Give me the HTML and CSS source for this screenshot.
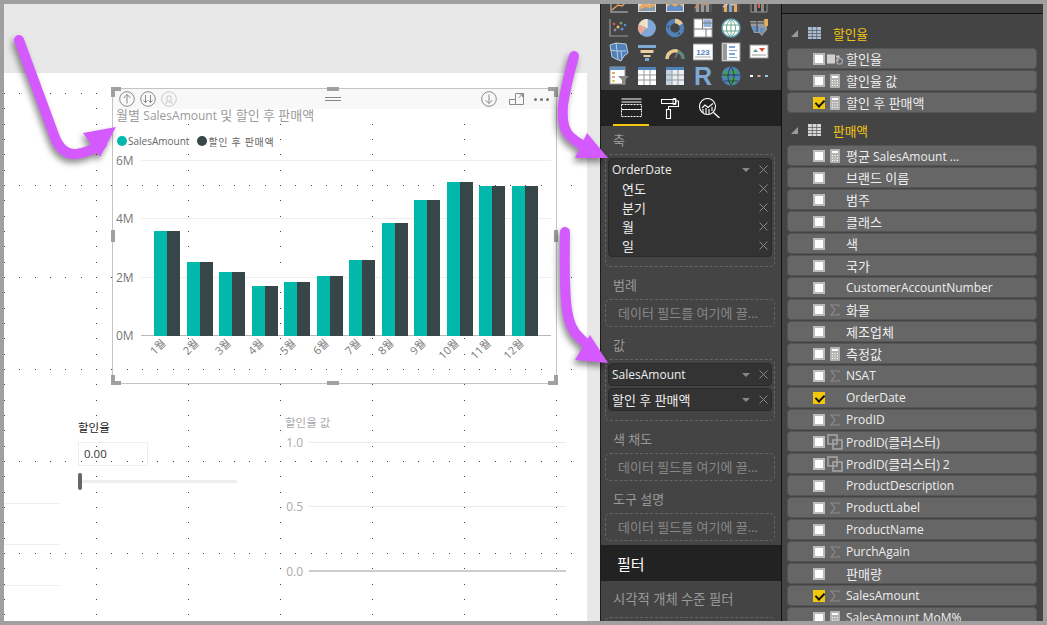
FILE: index.html
```html
<!DOCTYPE html>
<html lang="ko">
<head>
    <meta charset="UTF-8">
    <meta name="viewport" content="width=device-width, initial-scale=1.0">
    <title>Power BI 보고서</title>
    <link rel="stylesheet" href="styles.css">
</head>
<body>

<svg class="defs" width="0" height="0">
    <defs>
        <symbol id="i-calc" viewBox="0 0 10 14">
            <rect width="10" height="14" rx="1" fill="#b4b4b4"/>
            <rect x="2" y="2" width="6" height="2" fill="#fff"/>
            <path d="M2 6h1v1H2zM4.500 6h1v1h-1zM7 6h1v1H7zM2 8.500h1v1H2zM4.500 8.500h1v1h-1zM7 8.500h1v1H7zM2 11h1v1H2zM4.500 11h1v1h-1zM7 11h1v1H7z" fill="#fff"/>
        </symbol>
        <symbol id="i-sum" viewBox="0 0 10 12">
            <path d="M9 2.500V1H1l4 5-4 5h8V9.500" fill="none" stroke="#8c8c8c" stroke-width="1.200"/>
        </symbol>
        <symbol id="i-cluster" viewBox="0 0 16 16">
            <path d="M1 1h9v9H1zM6 6h9v9H6z" fill="none" stroke="#a6a6a6" stroke-width="1.600"/>
        </symbol>
        <symbol id="i-x" viewBox="0 0 9 9">
            <path d="M.5.500l8 8M8.500.500l-8 8" stroke="#8a8a8a" stroke-width="1" fill="none"/>
        </symbol>
    </defs>
</svg>

<div class="frame">
    <main class="canvas">
        <div class="page">
            <svg class="dots">
                <defs>
                    <pattern id="dotgrid" width="92" height="92" patternUnits="userSpaceOnUse">
                        <path d="M0 0h1v1H0zM15 0h1v1h-1zM31 0h1v1h-1zM46 0h1v1h-1zM61 0h1v1h-1zM77 0h1v1h-1zM0 15h1v1H0zM0 31h1v1H0zM0 46h1v1H0zM0 61h1v1H0zM0 77h1v1H0z" fill="#444"/>
                    </pattern>
                </defs>
                <rect width="100%" height="100%" fill="url(#dotgrid)"/>
            </svg>

            <section class="visual">
                <span class="handle corner tl"></span>
                <span class="handle corner tr"></span>
                <span class="handle corner bl"></span>
                <span class="handle corner br"></span>
                <span class="handle mid-h top"></span>
                <span class="handle mid-h bottom"></span>
                <span class="handle mid-v left"></span>
                <span class="handle mid-v right"></span>

                <div class="visual-header">
                    <svg class="head-icon" viewBox="0 0 16 16"><circle cx="8" cy="8" r="7.300"/><path d="M8 12.500V3.500M4.500 7L8 3.500 11.500 7"/></svg>
                    <svg class="head-icon" viewBox="0 0 16 16"><circle cx="8" cy="8" r="7.300"/><path d="M5.500 4v7.500M3.500 9.500l2 2 2-2M10.500 4v7.500M8.500 9.500l2 2 2-2"/></svg>
                    <svg class="head-icon faint" viewBox="0 0 16 16"><circle cx="8" cy="8" r="7.300"/><path d="M4 12h2V5h4v7h2M8 9v3"/></svg>
                    <span class="grip"></span>
                    <svg class="head-icon" viewBox="0 0 16 16"><circle cx="8" cy="8" r="7.300"/><path d="M8 3.500v9M4.500 9L8 12.500 11.500 9"/></svg>
                    <svg class="focus-icon" viewBox="0 0 15 12"><path d="M.5 6.500h6v5h-6zM6.500 11.500h8V.500h-8v6M9.500 5l4-4M10.500 1h3v3"/></svg>
                    <span class="more">
                        <i></i><i></i><i></i>
                    </span>
                </div>

                <h2 class="visual-title">월별 <span class="latin">SalesAmount</span> 및 할인 후 판매액</h2>

                <div class="legend">
                    <span class="legend-dot teal"></span><span class="legend-text first">SalesAmount</span>
                    <span class="legend-dot slate"></span><span class="legend-text second">할인 후 판매액</span>
                </div>

                <div class="plot">
                    <div class="axis-row"><span>6M</span><i></i></div>
                    <div class="axis-row"><span>4M</span><i></i></div>
                    <div class="axis-row"><span>2M</span><i></i></div>
                    <div class="axis-row base"><span>0M</span><i></i></div>
                    <div class="bars">
                        <div class="group"><b class="teal" style="height:105px"></b><b class="slate" style="height:105px"></b></div>
                        <div class="group"><b class="teal" style="height:74px"></b><b class="slate" style="height:74px"></b></div>
                        <div class="group"><b class="teal" style="height:64px"></b><b class="slate" style="height:64px"></b></div>
                        <div class="group"><b class="teal" style="height:50px"></b><b class="slate" style="height:50px"></b></div>
                        <div class="group"><b class="teal" style="height:54px"></b><b class="slate" style="height:54px"></b></div>
                        <div class="group"><b class="teal" style="height:60px"></b><b class="slate" style="height:60px"></b></div>
                        <div class="group"><b class="teal" style="height:76px"></b><b class="slate" style="height:76px"></b></div>
                        <div class="group"><b class="teal" style="height:113px"></b><b class="slate" style="height:113px"></b></div>
                        <div class="group"><b class="teal" style="height:136px"></b><b class="slate" style="height:136px"></b></div>
                        <div class="group"><b class="teal" style="height:154px"></b><b class="slate" style="height:154px"></b></div>
                        <div class="group"><b class="teal" style="height:150px"></b><b class="slate" style="height:150px"></b></div>
                        <div class="group"><b class="teal" style="height:150px"></b><b class="slate" style="height:150px"></b></div>
                    </div>
                </div>

                <div class="months">
                    <span>1월</span><span>2월</span><span>3월</span><span>4월</span><span>5월</span><span>6월</span>
                    <span>7월</span><span>8월</span><span>9월</span><span>10월</span><span>11월</span><span>12월</span>
                </div>
            </section>

            <section class="slicer">
                <div class="slicer-label">할인율</div>
                <div class="slicer-input">0.00</div>
                <div class="slider"><span class="thumb"></span></div>
            </section>

            <section class="value-chart">
                <div class="value-title">할인율 값</div>
                <div class="value-rows">
                    <div class="value-row"><span>1.0</span><i></i></div>
                    <div class="value-row"><span>0.5</span><i></i></div>
                    <div class="value-row base"><span>0.0</span><i></i></div>
                </div>
            </section>

            <div class="cut-chart"><i></i><i></i><i></i></div>
        </div>
    </main>

    <aside class="viz-pane">
        <div class="gallery">
            <div class="gallery-grid">
                <svg viewBox="0 0 20 20"><path d="M2 1v17h17" fill="none" stroke="#999" stroke-width="1.500"/><path d="M3 16l6-5 4 1 6-6" fill="none" stroke="#e8a05a" stroke-width="1.500"/></svg>
                <svg viewBox="0 0 20 20"><rect x="1" y="1" width="18" height="17" fill="#ddd"/><path d="M2 13l5-5 5 3 6-5v11H2z" fill="#e8a860"/><path d="M2 16l6-3 5 1 5-2v5H2z" fill="#8a9bb0"/></svg>
                <svg viewBox="0 0 20 20"><rect x="1" y="1" width="18" height="17" fill="#ddd"/><path d="M2 10l4-3 4 3 4-3 4 3v7H2z" fill="#e8a860"/><path d="M2 13l4-3 4 3 4-3 4 3v4H2z" fill="#5f8fc4"/></svg>
                <svg viewBox="0 0 20 20"><path d="M1 1h18v17H1z" fill="#555"/><path d="M3 9h3v9H3zM8 7h3v11H8zM13 5h3v13h-3z" fill="#999"/><path d="M2 14l6-6 4 3 7-7" fill="none" stroke="#e8804a" stroke-width="1.300"/></svg>
                <svg viewBox="0 0 20 20"><path d="M1 1h18v17H1z" fill="#555"/><path d="M3 8h3v10H3z" fill="#e8a860"/><path d="M8 10h3v8H8z" fill="#7fa4cc"/><path d="M13 6h3v12h-3z" fill="#e8a860"/><path d="M2 13l6-4 4 2 7-7" fill="none" stroke="#d0d0d0" stroke-width="1.200"/></svg>
                <svg viewBox="0 0 20 20"><path d="M2 1h16v17H2z" fill="#3a3a3a" stroke="#999"/><path d="M5 4h3v14H5zM12 8h3v10h-3z" fill="#888"/><path d="M9 6h2v8H9z" fill="#e0603a"/></svg>

                <svg viewBox="0 0 20 20"><path d="M1 1v17h18" fill="none" stroke="#999" stroke-width="1.200"/><circle cx="5" cy="6" r="1.300" fill="#d55"/><circle cx="12" cy="5" r="1.500" fill="#7a9c6c"/><circle cx="16" cy="7" r="1.300" fill="#5f8fc4"/><circle cx="9" cy="9" r="1.500" fill="#e8c060"/><circle cx="13" cy="11" r="1.500" fill="#5f8fc4"/><circle cx="6" cy="12" r="1.400" fill="#88a"/></svg>
                <svg viewBox="0 0 20 20"><circle cx="10" cy="10" r="9" fill="#7fa8d4"/><path d="M10 10V1a9 9 0 0 0-8.400 5.700z" fill="#f0e0c0"/><path d="M10 10L1.600 6.700A9 9 0 0 0 3.500 16.200z" fill="#e8a898"/><path d="M10 10V1" stroke="#fff" fill="none"/></svg>
                <svg viewBox="0 0 20 20"><circle cx="10" cy="10" r="7" fill="none" stroke="#4f82b8" stroke-width="4.500"/><path d="M10 3a7 7 0 0 1 6 3.500" fill="none" stroke="#e8c890" stroke-width="4.500"/><path d="M3.500 7.500L3 10M13 16.300l2 -1.500" stroke="#444" fill="none" stroke-width="1.200"/></svg>
                <svg viewBox="0 0 20 20"><rect width="18" height="18" x="1" y="1" fill="#fff" stroke="#999"/><path d="M10.500 2H18v7h-7.500z" fill="#8fb3d9"/><path d="M9.500 1v10M1 11h18M13 11v8M10 5h9" stroke="#777" fill="none"/></svg>
                <svg viewBox="0 0 20 20"><circle cx="10" cy="10" r="9" fill="#fff" stroke="#5f9fb0" stroke-width="1.500"/><path d="M1 7h18M1 13h18M10 1v18M10 1c-6 5-6 13 0 18M10 1c6 5 6 13 0 18" fill="none" stroke="#6fa890"/></svg>
                <svg viewBox="0 0 20 20"><path d="M1 3h14l3 2v7l-3 3-2 3-3-3H5L2 8z" fill="#9a9a9a"/><path d="M3 8h7v6H5zM11 10h5l-3 6-2-2z" fill="#5f8fc4"/><path d="M15 1h4v7h-3z" fill="#e8b050"/><path d="M1 5h14M8 3v11" stroke="#444" fill="none"/></svg>

                <svg viewBox="0 0 20 20"><path d="M1 3l6-2 10 1 2 9-4 3-3 5-5-2-4-2-1-6z" fill="#4f82b8" stroke="#bcd" stroke-width="1"/><path d="M7 1l1 8 9 0M1 8l7 1 1 9M12 9l1 8" stroke="#bcd" fill="none"/></svg>
                <svg viewBox="0 0 20 20"><path d="M1 3h18v3H1z" fill="#7fa8d4"/><path d="M3.500 8h13v3h-13z" fill="#e8d0a0"/><path d="M6.500 13h7v2h-7z" fill="#e8d0a0"/><path d="M8 16h4v3H8z" fill="#7fa8d4"/></svg>
                <svg viewBox="0 0 20 20"><path d="M2 17a8 8 0 0 1 11-7.500" fill="none" stroke="#e8c890" stroke-width="3.500"/><path d="M13 9.500a8 8 0 0 1 5 7.500" fill="none" stroke="#5f8a7a" stroke-width="3.500"/><path d="M13 10l-3 6" stroke="#777" stroke-width="1.500"/></svg>
                <svg viewBox="0 0 20 20"><rect x="0" y="2" width="20" height="16" fill="#fff" stroke="#999" stroke-width="1"/><text x="10" y="12.500" class="card-num">123</text><path d="M2 15h16" stroke="#aaa"/></svg>
                <svg viewBox="0 0 20 20"><rect x="1" y="1" width="18" height="18" fill="#fff" stroke="#999"/><path d="M2 2h4v16H2z" fill="#999"/><path d="M8 4h6v2H8zM8 8h8v1H8zM8 11h6v2H8zM8 15h8v1H8z" fill="#7fa8d4"/></svg>
                <svg viewBox="0 0 20 20"><rect x="1" y="3" width="18" height="13" fill="#fff" stroke="#999"/><path d="M4 10l2.500-3L9 10z" fill="#5a9a7a"/><path d="M10 6h6l-3 4z" fill="#d0503a"/><path d="M3 13h14" stroke="#999"/></svg>

                <svg viewBox="0 0 20 20"><rect x="1" y="1" width="15" height="17" fill="#fff" stroke="#999"/><path d="M1 1h15v3H1z" fill="#5f8fc4"/><path d="M3 6h3v2H3z" fill="#e8a860"/><path d="M3 10h3v2H3z" fill="#e8a898"/><path d="M3 14h3v2H3z" fill="#e8c860"/><path d="M9 10h11l-4 4v5l-3 0v-5z" fill="#888"/></svg>
                <svg viewBox="0 0 20 20"><rect width="18" height="18" x="1" y="1" fill="#fff"/><path d="M1 1h18v3H1z" fill="#4f82b8"/><path d="M7 4v15M13 4v15M1 9h18M1 14h18" stroke="#999" fill="none"/></svg>
                <svg viewBox="0 0 20 20"><rect width="18" height="18" x="1" y="1" fill="#e8eef4"/><path d="M1 1h18v3H1z" fill="#4f82b8"/><path d="M1 4h6v15H1z" fill="#c4d4e4"/><path d="M7 4v15M13 4v15M1 9h18M1 14h18" stroke="#999" fill="none"/></svg>
                <svg class="open" viewBox="0 0 20 20"><text x="10" y="18.500" class="r-glyph">R</text></svg>
                <svg viewBox="0 0 20 20"><circle cx="10" cy="10" r="9.500" fill="#4f82b8"/><path d="M3 4l5 2-2 5-4 1zM11 2l6 4-3 3-4-1zM7 13l6-2 3 3-4 5-3-1z" fill="#3fa05a"/><path d="M1 9h18M3 15h14M10 1c-4 5-4 13 0 18M10 1c4 5 4 13 0 18" stroke="#223" stroke-width=".700" fill="none"/></svg>
                <svg viewBox="0 0 20 20"><path d="M1 9h3v2H1z" fill="#fff"/><path d="M8.500 9h3v2h-3z" fill="#e8a0a0"/><path d="M16 9h3v2h-3z" fill="#a0c0e8"/></svg>
            </div>
        </div>

        <nav class="tabs">
            <a class="tab active">
                <svg width="21" height="20" viewBox="0 0 21 20"><path d="M.5 1h20M.5 4h20" stroke="#fff" fill="none"/><path d="M.5 6.500h20v5H.5zM.5 11.500h20v7H.500z" stroke="#fff" stroke-dasharray="2 1" fill="none"/></svg>
            </a>
            <a class="tab">
                <svg width="19" height="21" viewBox="0 0 19 21"><path d="M.5 1.500h14v4H.5zM14.500 3h3v5.500H7.500v3" stroke="#fff" fill="none" stroke-width="1.100"/><path d="M5.500 11.500h4v9h-4z" stroke="#fff" fill="none" stroke-width="1.100"/><path d="M12 .5h3v6h-3z" fill="none" stroke="#fff" stroke-width=".800"/></svg>
            </a>
            <a class="tab">
                <svg width="21" height="20" viewBox="0 0 21 20"><circle cx="8.500" cy="8.500" r="8" stroke="#fff" fill="none" stroke-width="1.100"/><path d="M14.500 14.500l6 5.500" stroke="#fff" stroke-width="1.300"/><path d="M3 10l3-3 3 2.500 5-4" stroke="#fff" fill="none" stroke-width="1.100"/><path d="M4 11v4M7 10v6M10 11v5M13 9v4" stroke="#fff" stroke-width="1.100"/></svg>
            </a>
        </nav>

        <div class="well-block first">
            <div class="well-label">축</div>
            <div class="well">
                <div class="field-group">
                    <div class="field-row"><span class="field-name">OrderDate</span><span class="caret"></span><svg class="remove"><use href="#i-x"/></svg></div>
                    <div class="field-row sub"><span class="field-name ko">연도</span><svg class="remove"><use href="#i-x"/></svg></div>
                    <div class="field-row sub"><span class="field-name ko">분기</span><svg class="remove"><use href="#i-x"/></svg></div>
                    <div class="field-row sub"><span class="field-name ko">월</span><svg class="remove"><use href="#i-x"/></svg></div>
                    <div class="field-row sub"><span class="field-name ko">일</span><svg class="remove"><use href="#i-x"/></svg></div>
                </div>
            </div>
        </div>

        <div class="well-block">
            <div class="well-label">범례</div>
            <div class="well empty">데이터 필드를 여기에 끌...</div>
        </div>

        <div class="well-block">
            <div class="well-label">값</div>
            <div class="well">
                <div class="field-group single"><div class="field-row"><span class="field-name">SalesAmount</span><span class="caret"></span><svg class="remove"><use href="#i-x"/></svg></div></div>
                <div class="field-group single"><div class="field-row"><span class="field-name ko">할인 후 판매액</span><span class="caret"></span><svg class="remove"><use href="#i-x"/></svg></div></div>
            </div>
        </div>

        <div class="well-block">
            <div class="well-label">색 채도</div>
            <div class="well empty">데이터 필드를 여기에 끌...</div>
        </div>

        <div class="well-block">
            <div class="well-label">도구 설명</div>
            <div class="well empty">데이터 필드를 여기에 끌...</div>
        </div>

        <div class="filter-band">필터</div>

        <div class="well-block">
            <div class="well-label filter-label">시각적 개체 수준 필터</div>
            <div class="well empty"></div>
        </div>
    </aside>

    <aside class="fields-pane">
        <div class="fields-top"></div>

        <div class="table-head">
            <svg class="tree-caret" viewBox="0 0 7 7"><path d="M7 0v7H0z"/></svg>
            <svg class="table-icon" viewBox="0 0 13 12"><path d="M0 0h13v12H0z" fill="#a9bdd6"/><path d="M0 3.500h13M0 6.500h13M0 9.500h13M4.300 0v12M8.700 0v12" stroke="#555" stroke-width=".700"/></svg>
            <span>할인율</span>
        </div>
        <div class="field"><span class="check"></span><svg class="type wide" viewBox="0 0 14 12"><path d="M0 2h7v8H0z" fill="#d0d0d0"/><path d="M8 3h3v2H8zM8 6h2v2H8z" fill="#ccc"/><circle cx="11" cy="8" r="2.500" fill="none" stroke="#aaa"/></svg><span class="name ko">할인율</span></div>
        <div class="field"><span class="check"></span><svg class="type"><use href="#i-calc"/></svg><span class="name ko">할인율 값</span></div>
        <div class="field"><span class="check on"></span><svg class="type"><use href="#i-calc"/></svg><span class="name ko">할인 후 판매액</span></div>

        <div class="table-head second">
            <svg class="tree-caret" viewBox="0 0 7 7"><path d="M7 0v7H0z"/></svg>
            <svg class="table-icon" viewBox="0 0 13 12"><path d="M0 0h13v12H0z" fill="#d8d8d8"/><path d="M0 3.500h13M0 6.500h13M0 9.500h13M4.300 0v12M8.700 0v12" stroke="#555" stroke-width=".700"/></svg>
            <span>판매액</span>
        </div>
        <div class="field"><span class="check"></span><svg class="type"><use href="#i-calc"/></svg><span class="name"><span class="ko">평균</span> SalesAmount ...</span></div>
        <div class="field"><span class="check"></span><span class="type"></span><span class="name ko">브랜드 이름</span></div>
        <div class="field"><span class="check"></span><span class="type"></span><span class="name ko">범주</span></div>
        <div class="field"><span class="check"></span><span class="type"></span><span class="name ko">클래스</span></div>
        <div class="field"><span class="check"></span><span class="type"></span><span class="name ko">색</span></div>
        <div class="field"><span class="check"></span><span class="type"></span><span class="name ko">국가</span></div>
        <div class="field"><span class="check"></span><span class="type"></span><span class="name">CustomerAccountNumber</span></div>
        <div class="field"><span class="check"></span><svg class="type"><use href="#i-sum"/></svg><span class="name ko">화물</span></div>
        <div class="field"><span class="check"></span><span class="type"></span><span class="name ko">제조업체</span></div>
        <div class="field"><span class="check"></span><svg class="type"><use href="#i-calc"/></svg><span class="name ko">측정값</span></div>
        <div class="field"><span class="check"></span><svg class="type"><use href="#i-sum"/></svg><span class="name">NSAT</span></div>
        <div class="field"><span class="check on"></span><span class="type"></span><span class="name">OrderDate</span></div>
        <div class="field"><span class="check"></span><svg class="type"><use href="#i-sum"/></svg><span class="name">ProdID</span></div>
        <div class="field"><span class="check"></span><svg class="type wide"><use href="#i-cluster"/></svg><span class="name">ProdID(<span class="ko">클러스터</span>)</span></div>
        <div class="field"><span class="check"></span><svg class="type wide"><use href="#i-cluster"/></svg><span class="name">ProdID(<span class="ko">클러스터</span>) 2</span></div>
        <div class="field"><span class="check"></span><span class="type"></span><span class="name">ProductDescription</span></div>
        <div class="field"><span class="check"></span><svg class="type"><use href="#i-sum"/></svg><span class="name">ProductLabel</span></div>
        <div class="field"><span class="check"></span><span class="type"></span><span class="name">ProductName</span></div>
        <div class="field"><span class="check"></span><svg class="type"><use href="#i-sum"/></svg><span class="name">PurchAgain</span></div>
        <div class="field"><span class="check"></span><span class="type"></span><span class="name ko">판매량</span></div>
        <div class="field"><span class="check on"></span><svg class="type"><use href="#i-sum"/></svg><span class="name">SalesAmount</span></div>
        <div class="field"><span class="check"></span><svg class="type"><use href="#i-calc"/></svg><span class="name">SalesAmount MoM%</span></div>
    </aside>
</div>

<!-- callout arrows drawn on top of the screenshot -->
<svg class="arrows" viewBox="0 0 1047 625">
    <path class="shaft" d="M19 40 L54 135 Q61 155 76 154 Q88 153 102 144"/>
    <polygon class="head" points="116,127 83,133 100,157"/>
    <path class="shaft" d="M574 56 Q566 85 563 105 Q561 130 572 138 Q578 143 590 150"/>
    <polygon class="head" points="608,158 575,158 587,133"/>
    <path class="shaft" d="M565 232 Q564 290 567 310 Q570 330 580 338 Q586 344 594 352"/>
    <polygon class="head" points="608,363 575,360 590,335"/>
</svg>

</body>
</html>
```

FILE: styles.css
```css
* {
    box-sizing: border-box;
}

html, body {
    margin: 0;
    padding: 0;
}

body {
    width: 1047px;
    height: 625px;
    overflow: hidden;
    position: relative;
    font-family: "Open Sans", "Noto Sans CJK KR", sans-serif;
}

.defs {
    position: absolute;
}

.frame {
    display: flex;
    width: 1047px;
    height: 625px;
    border: 4px solid #a0a0a0;
}

/* canvas */
.canvas {
    width: 596px;
    flex: none;
    padding: 69px 13px 0 0;
    background: #e8e8e8;
}

.page {
    position: relative;
    height: 100%;
    background: #fff;
}

.dots {
    position: absolute;
    left: 0;
    top: 20px;
    width: 100%;
    height: calc(100% - 20px);
}

.visual {
    position: absolute;
    left: 108px;
    top: 15px;
    width: 445px;
    height: 296px;
    border: 1px solid #c4c4c4;
}

.handle {
    position: absolute;
    background: #a0a0a0;
}

.corner {
    width: 10px;
    height: 10px;
    background: none;
    border: 0 solid #a0a0a0;
}

.tl { left: -2px; top: -2px; border-width: 4px 0 0 4px; }
.tr { right: -2px; top: -2px; border-width: 4px 4px 0 0; }
.bl { left: -2px; bottom: -2px; border-width: 0 0 4px 4px; }
.br { right: -2px; bottom: -2px; border-width: 0 4px 4px 0; }

.mid-h {
    width: 12px;
    height: 4px;
    left: 214px;
}

.mid-h.top { top: -2px; }
.mid-h.bottom { bottom: -2px; }

.mid-v {
    width: 4px;
    height: 12px;
    top: 141px;
}

.mid-v.left { left: -2px; }
.mid-v.right { right: -2px; }

.visual-header {
    display: flex;
    align-items: center;
    height: 20px;
    padding: 0 6px 0 6px;
    background: #f8f8f8;
}

.head-icon {
    width: 16px;
    height: 16px;
    margin-right: 5px;
    fill: none;
    stroke: #8a8a8a;
    stroke-width: 1;
}

.head-icon.faint {
    stroke: #c8c8c8;
}

.grip {
    width: 16px;
    height: 4px;
    margin: -1px 0 0 143px;
    border-top: 1px solid #888;
    border-bottom: 1px solid #888;
}

.visual-header .grip + .head-icon {
    margin-left: 140px;
    margin-right: 12px;
}

.focus-icon {
    width: 15px;
    height: 12px;
    margin-right: 10px;
    fill: none;
    stroke: #8a8a8a;
    stroke-width: 1;
}

.more {
    display: flex;
    gap: 3px;
}

.more i {
    width: 3px;
    height: 3px;
    background: #777;
    border-radius: 50%;
}

.visual-title {
    margin: -1px 0 0;
    padding-left: 3px;
    height: 17px;
    font-size: 13px;
    font-weight: 400;
    line-height: 14px;
    color: #9a9a9a;
    white-space: nowrap;
}

.visual-title .latin {
    font-size: 12px;
}

.legend {
    display: flex;
    align-items: center;
    height: 14px;
    margin-top: 9px;
    padding-left: 4px;
    font-size: 10px;
    color: #666;
    white-space: nowrap;
}

.legend-dot {
    width: 10px;
    height: 10px;
    border-radius: 50%;
    margin-right: 1px;
}

.legend-text.first {
    margin-right: 8px;
}

.legend-text.second {
    letter-spacing: .7px;
}

.teal { background: #01b8aa; }
.slate { background: #374649; }

.plot {
    position: relative;
    display: flex;
    flex-direction: column;
    justify-content: space-between;
    height: 190px;
    margin-top: 5px;
}

.axis-row {
    display: flex;
    align-items: center;
    height: 14px;
    padding-right: 5px;
    font-size: 12px;
    color: #777;
}

.axis-row span {
    width: 28px;
    padding-left: 3px;
}

.axis-row i {
    flex: 1;
    height: 1px;
    background: #eee;
}

.axis-row.base i {
    background: #b8b8b8;
}

.bars {
    position: absolute;
    left: 41px;
    bottom: 7px;
    display: flex;
    align-items: flex-end;
}

.group {
    display: flex;
    align-items: flex-end;
    width: 32.55px;
}

.group b {
    display: block;
    width: 13px;
}

.months {
    display: flex;
    padding-left: 18px;
    margin-top: -9px;
    font-size: 11px;
    line-height: 14px;
    color: #777;
}

.months span {
    flex: none;
    width: 32.55px;
    height: 14px;
    text-align: right;
    white-space: nowrap;
    transform: rotate(-45deg);
    transform-origin: right center;
}

.slicer {
    position: absolute;
    left: 74px;
    top: 347px;
    width: 159px;
}

.slicer-label {
    height: 16px;
    font-size: 11.500px;
    line-height: 16px;
    color: #222;
}

.slicer-input {
    width: 70px;
    height: 24px;
    margin-top: 6px;
    padding-left: 5px;
    border: 1px solid #eee;
    font-size: 11.500px;
    line-height: 22px;
    color: #333;
}

.slider {
    position: relative;
    height: 3px;
    margin-top: 14px;
    background: #eee;
}

.thumb {
    position: absolute;
    left: 0;
    top: -7px;
    width: 4px;
    height: 17px;
    border-radius: 2px;
    background: #666;
}

.value-chart {
    position: absolute;
    left: 281px;
    top: 342px;
    width: 281px;
}

.value-title {
    height: 16px;
    font-size: 11.500px;
    line-height: 16px;
    color: #aaa;
}

.value-rows {
    display: flex;
    flex-direction: column;
    justify-content: space-between;
    height: 143px;
    margin-top: 4px;
}

.value-row {
    display: flex;
    align-items: center;
    height: 14px;
    font-size: 12px;
    color: #aaa;
}

.value-row span {
    width: 18px;
    text-align: right;
    margin-right: 6px;
}

.value-row i {
    flex: 1;
    height: 1px;
    background: #ebebeb;
}

.value-row.base i {
    height: 2px;
    background: #ccc;
}

.cut-chart {
    position: absolute;
    left: 0;
    top: 430px;
    display: flex;
    flex-direction: column;
    gap: 40px;
    width: 56px;
}

.cut-chart i {
    height: 1px;
    background: #eee;
}

/* visualizations pane */
.viz-pane {
    width: 182px;
    flex: none;
    overflow: hidden;
    background: #444;
    border-left: 1px solid #1c1c1c;
    border-right: 1px solid #111;
    font-size: 12px;
    color: #999;
}

.gallery {
    height: 86px;
    overflow: hidden;
}

.gallery-grid {
    display: grid;
    grid-template-columns: repeat(6, 20px);
    grid-auto-rows: 20px;
    gap: 4px 8px;
    margin-top: -10px;
    padding-left: 8px;
}

.gallery-grid svg {
    width: 20px;
    height: 20px;
}

.gallery-grid svg.open {
    overflow: visible;
}

.card-num {
    font-family: "Liberation Sans", sans-serif;
    font-size: 8px;
    font-weight: 700;
    fill: #4f82b8;
    text-anchor: middle;
}

.r-glyph {
    font-family: "Liberation Sans", sans-serif;
    font-size: 25px;
    font-weight: 700;
    fill: #7fa8d4;
    text-anchor: middle;
}

.tabs {
    position: relative;
    display: flex;
    height: 36px;
    padding: 8px 0 0 12px;
    background: #222;
}

.tab {
    display: flex;
    justify-content: center;
    width: 36px;
    margin-right: 3px;
    height: 28px;
}

.tab.active {
    border-bottom: 2px solid #f2c80f;
}

.well-block {
    margin-top: 8px;
}

.well-block.first {
    margin-top: 4px;
}

.well-label {
    height: 20px;
    margin: 0 0 4px 12px;
    font-size: 13px;
    line-height: 20px;
    color: #999;
}

.filter-label {
    margin-bottom: 8px;
    font-size: 13.300px;
}

.well {
    width: 170px;
    margin-left: 4px;
    padding: 3px 2px 9px;
    border: 1px dashed #666;
    border-radius: 5px;
}

.well.empty {
    height: 28px;
    padding: 0 0 0 12px;
    line-height: 27px;
    font-size: 13px;
    color: #888;
    white-space: nowrap;
}

.field-group {
    padding: 1px 0;
    background: #333;
    border: 1px solid #2a2a2a;
    border-radius: 4px;
    color: #eee;
    font-size: 12px;
}

.field-group.single {
    padding: 0;
    margin-bottom: 2px;
}

.field-group.single:last-child {
    margin-bottom: 0;
}

.field-group.single .field-row {
    height: 21px;
}

.field-row {
    display: flex;
    align-items: center;
    height: 19px;
    padding: 0 3px 0 3px;
}

.field-row.sub {
    padding-left: 13px;
}

.field-name {
    flex: 1;
    white-space: nowrap;
}

.ko {
    font-size: 13px;
}

.caret {
    width: 0;
    height: 0;
    margin-right: 9px;
    border: 4px solid transparent;
    border-top: 4px solid #888;
    border-bottom: 0;
}

.remove {
    width: 9px;
    height: 9px;
}

.filter-band {
    height: 36px;
    margin-top: 4px;
    padding-left: 16px;
    background: #222;
    font-size: 15px;
    line-height: 39px;
    color: #fff;
}

/* fields pane */
.fields-pane {
    flex: 1;
    overflow: hidden;
    background: #444;
    font-size: 12px;
}

.fields-top {
    height: 10px;
    margin-bottom: 9px;
    background: #3a3a3a;
    border-bottom: 1px solid #111;
}

.table-head {
    display: flex;
    align-items: center;
    height: 20px;
    margin-bottom: 5px;
    padding-left: 9px;
    font-size: 12.700px;
    color: #f2c80f;
}

.table-head.second {
    margin-top: 7px;
}

.tree-caret {
    width: 7px;
    height: 7px;
    fill: #999;
    margin-right: 10px;
}

.table-icon {
    width: 13px;
    height: 12px;
    margin-right: 12px;
}

.field {
    display: flex;
    align-items: center;
    width: 250px;
    height: 21px;
    margin: 0 0 1px 5px;
    padding-left: 25px;
    background: #666;
    border: 1px solid #555;
    border-radius: 4px;
    color: #eee;
    white-space: nowrap;
}

.check {
    position: relative;
    flex: none;
    width: 12px;
    height: 12px;
    background: #fff;
    border: 2px solid #bbb;
}

.check.on {
    background: #f2c80f;
    border-color: #f2c80f;
}

.check.on::after {
    content: "";
    position: absolute;
    left: 2px;
    top: -1px;
    width: 4px;
    height: 7px;
    border: solid #111;
    border-width: 0 2px 2px 0;
    transform: rotate(45deg);
}

.type {
    flex: none;
    width: 10px;
    height: 14px;
    margin: 0 6px 0 5px;
}

.type.wide {
    width: 16px;
    height: 16px;
    margin: 0 3px 0 2px;
}

/* arrows */
.arrows {
    position: absolute;
    left: 0;
    top: 0;
    width: 1047px;
    height: 625px;
    pointer-events: none;
    filter: drop-shadow(-2px 4px 3px rgba(0, 0, 0, .45));
}

.shaft {
    fill: none;
    stroke: #d45aff;
    stroke-width: 10;
    stroke-linecap: round;
    stroke-linejoin: round;
}

.head {
    fill: #d45aff;
}
```
